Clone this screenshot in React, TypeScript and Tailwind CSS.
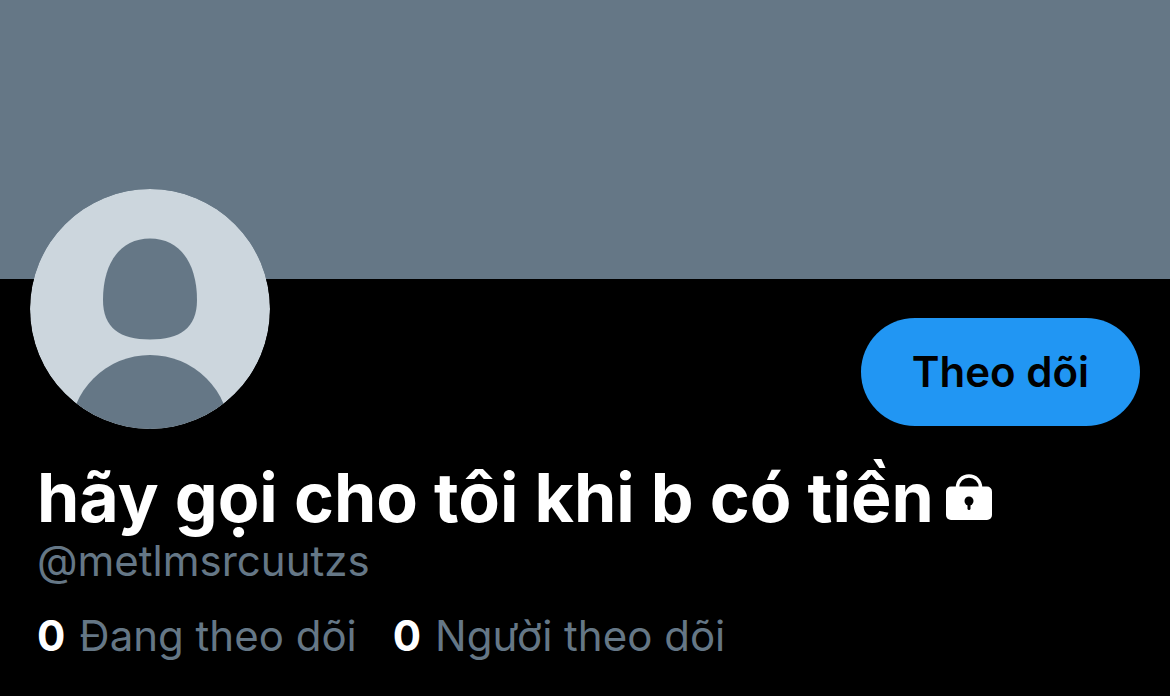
import React, { useState } from "react";

interface Stat {
  count: number;
  label: string;
  href: string;
}

const profile = {
  name: "hãy gọi cho tôi khi b có tiền",
  username: "metlmsrcuutzs",
};

const stats: Stat[] = [
  { count: 0, label: "Đang theo dõi", href: "#following" },
  { count: 0, label: "Người theo dõi", href: "#followers" },
];

const Avatar = () => (
  <svg
    viewBox="0 0 240 240"
    className="relative w-60 h-60 -mt-[90px] rounded-full shrink-0"
    role="img"
    aria-label={profile.name}
  >
    <defs>
      <clipPath id="avatar-circle">
        <circle cx="120" cy="120" r="120" />
      </clipPath>
    </defs>
    <g clipPath="url(#avatar-circle)">
      <rect width="240" height="240" fill="#ccd6dd" />
      <path
        d="M120 49.500C149 49.500 167 73 167 111C167 139 150 150.500 120 150.500C90 150.500 73 139 73 111C73 73 91 49.500 120 49.500Z"
        fill="#657786"
      />
      <circle cx="120" cy="246" r="80" fill="#657786" />
    </g>
  </svg>
);

const LockIcon = () => (
  <svg
    viewBox="0 0 46 46"
    className="w-[46px] h-[46px] shrink-0"
    role="img"
    aria-label="Tài khoản riêng tư"
  >
    <path
      d="M11.500 15V13.500C11.500 6.800 16.500 2 23 2S34.500 6.800 34.500 13.500V15"
      fill="none"
      stroke="#fff"
      strokeWidth="3.500"
    />
    <rect y="12.500" width="46" height="33.500" rx="5" fill="#fff" />
    <circle cx="23" cy="27" r="4.500" fill="#000" />
    <path d="M23 28V34.500" stroke="#000" strokeWidth="3" strokeLinecap="round" />
  </svg>
);

const App = () => {
  const [following, setFollowing] = useState(false);

  return (
    <div className="w-full min-h-screen bg-black text-white font-['Inter',sans-serif]">
      <div className="w-full h-[279px] bg-[#657786]" />

      <main className="pb-8">
        <div className="flex items-start justify-between px-[30px]">
          <Avatar />
          <button
            type="button"
            aria-pressed={following}
            onClick={() => setFollowing(!following)}
            className="mt-[39px] h-[108px] px-[51px] rounded-full bg-[#2196f3] text-black text-[42px] leading-[48px] font-semibold"
          >
            Theo dõi
          </button>
        </div>

        <div className="px-[37px] pt-7">
          <div className="flex items-center gap-3">
            <h1 className="text-[68px] leading-[80px] font-bold">
              {profile.name}
            </h1>
            <LockIcon />
          </div>
          <p className="text-[42px] leading-[48px] text-[#657786]">
            @{profile.username}
          </p>

          <div className="flex gap-9 mt-6">
            {stats.map((stat) => (
              <a
                key={stat.href}
                href={stat.href}
                className="flex gap-3.5 text-[42px] leading-[54px]"
              >
                <span className="font-bold">{stat.count}</span>
                <span className="text-[#657786]">{stat.label}</span>
              </a>
            ))}
          </div>
        </div>
      </main>
    </div>
  );
};

export default App;
